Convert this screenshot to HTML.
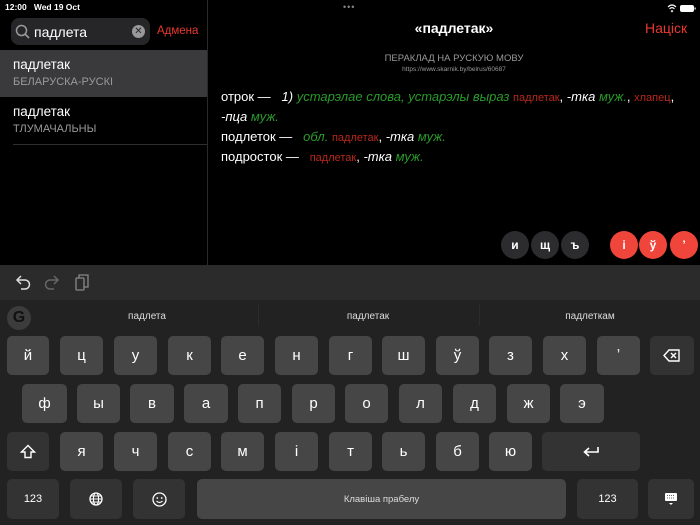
<!DOCTYPE html>
<html><head><meta charset="utf-8"><style>
*{margin:0;padding:0;box-sizing:border-box}
body{width:700px;height:525px;background:#000;position:relative;overflow:hidden;font-family:"Liberation Sans","DejaVu Sans",sans-serif;color:#fff}
.a{position:absolute}
.k{position:absolute;background:#464646;border-radius:5px;color:#fff;font-size:15px;display:flex;align-items:center;justify-content:center}
.s{background:#333}
.c{position:absolute;width:28px;height:28px;border-radius:14px;display:flex;align-items:center;justify-content:center;font-size:12px;font-weight:bold;top:231px}
.g{color:#2a9a2a;font-style:italic}
.r{color:#b8281c}
.i{font-style:italic}
.line{position:absolute;left:221px;font-size:13px;white-space:nowrap}
</style></head><body>
<div class="a" style="left:5px;top:2px;font-size:8.5px;font-weight:bold">12:00&nbsp;&nbsp;&nbsp;Wed 19 Oct</div>
<div class="a" style="left:343px;top:2px;font-size:9px;color:#888;letter-spacing:1px">•••</div>
<svg class="a" style="left:667px;top:4px" width="30" height="9"><path d="M1 3 Q5 -1 9 3 M2.5 4.8 Q5 2.5 7.5 4.8 M4 6.5 L5 7.6 L6 6.5" stroke="#fff" stroke-width="1.2" fill="none"/><rect x="13" y="1" width="14" height="7" rx="2" fill="#fff"/><rect x="27.5" y="3.5" width="1.2" height="2" fill="#fff"/></svg>
<div class="a" style="left:207px;top:0;width:1px;height:265px;background:#2a2a2a"></div>
<div class="a" style="left:11px;top:18px;width:139px;height:27px;background:#262628;border-radius:8px"></div>
<svg class="a" style="left:15px;top:24px" width="16" height="16"><circle cx="6.5" cy="6.5" r="5" stroke="#999" stroke-width="1.5" fill="none"/><path d="M10 10 L14 14" stroke="#999" stroke-width="1.6"/></svg>
<div class="a" style="left:34px;top:24px;font-size:14px">падлета</div>
<div class="a" style="left:132px;top:25px;width:13px;height:13px;border-radius:7px;background:#999;color:#262628;font-size:10px;font-weight:bold;text-align:center;line-height:13px">✕</div>
<div class="a" style="left:157px;top:25px;font-size:11.5px;color:#e8392f">Адмена</div>
<div class="a" style="left:0;top:50px;width:207px;height:47px;background:#3a3a3c"></div>
<div class="a" style="left:13px;top:57px;font-size:13.5px">падлетак</div>
<div class="a" style="left:13px;top:76px;font-size:11px;color:#9a9a9a">БЕЛАРУСКА-РУСКІ</div>
<div class="a" style="left:13px;top:104px;font-size:13.5px">падлетак</div>
<div class="a" style="left:13px;top:123px;font-size:11px;color:#9a9a9a">ТЛУМАЧАЛЬНЫ</div>
<div class="a" style="left:13px;top:144px;width:194px;height:1px;background:#2e2e2e"></div>
<div class="a" style="left:208px;top:20px;width:492px;text-align:center;font-size:14px;font-weight:bold">«падлетак»</div>
<div class="a" style="left:645px;top:20px;font-size:14px;color:#e8392f">Націск</div>
<div class="a" style="left:208px;top:53px;width:492px;text-align:center;font-size:9.5px;color:#999">ПЕРАКЛАД НА РУСКУЮ МОВУ</div>
<div class="a" style="left:208px;top:66px;width:492px;text-align:center;font-size:6.5px;color:#999">https://www.skarnik.by/belrus/60687</div>
<div class="line" style="top:89px">отрок —&nbsp;&nbsp; <span class="i">1)</span> <span class="g">устарэлае слова, устарэлы выраз</span> <span class="r" style="font-size:11px">падлетак</span>, <span class="i">-тка</span> <span class="g">муж.</span>, <span class="r" style="font-size:11px">хлапец</span>,</div>
<div class="line" style="top:109px"><span class="i">-пца</span> <span class="g">муж.</span></div>
<div class="line" style="top:129px">подлеток —&nbsp;&nbsp; <span class="g">обл.</span> <span class="r" style="font-size:11px">падлетак</span>, <span class="i">-тка</span> <span class="g">муж.</span></div>
<div class="line" style="top:149px">подросток —&nbsp;&nbsp; <span class="r" style="font-size:11px">падлетак</span>, <span class="i">-тка</span> <span class="g">муж.</span></div>
<div class="c" style="left:501px;background:#2c2c2e">и</div>
<div class="c" style="left:531px;background:#2c2c2e">щ</div>
<div class="c" style="left:561px;background:#2c2c2e">ъ</div>
<div class="c" style="left:610px;background:#f0453a">і</div>
<div class="c" style="left:639px;background:#f0453a">ў</div>
<div class="c" style="left:670px;background:#f0453a">ʼ</div>
<div class="a" style="left:0;top:265px;width:700px;height:35px;background:#2b2b2b"></div>
<div class="a" style="left:0;top:300px;width:700px;height:225px;background:#222"></div>
<svg class="a" style="left:14px;top:274px" width="80" height="18"><path d="M4 6 H11 A4.5 4.5 0 0 1 11 15 H7 M7 2 L3 6 L7 10" stroke="#ddd" stroke-width="1.5" fill="none"/><path d="M43 6 H36 A4.5 4.5 0 0 0 36 15 H40 M40 2 L44 6 L40 10" stroke="#666" stroke-width="1.5" fill="none"/><rect x="62" y="4" width="8" height="12" rx="1" stroke="#888" stroke-width="1.3" fill="none"/><path d="M65 4 V1 H74 V13 H70" stroke="#888" stroke-width="1.3" fill="none"/></svg>
<div class="a" style="left:7px;top:306px;width:24px;height:24px;border-radius:12px;background:#3c3c3c;color:#111;font-weight:bold;font-size:16px;text-align:center;line-height:24px">G</div>
<div class="a" style="left:72px;top:311px;width:150px;text-align:center;font-size:10px;color:#ddd">падлета</div>
<div class="a" style="left:258px;top:304px;width:1px;height:22px;background:#2c2c2c"></div>
<div class="a" style="left:293px;top:311px;width:150px;text-align:center;font-size:10px;color:#ddd">падлетак</div>
<div class="a" style="left:479px;top:304px;width:1px;height:22px;background:#2c2c2c"></div>
<div class="a" style="left:515px;top:311px;width:150px;text-align:center;font-size:10px;color:#ddd">падлеткам</div>
<div class="k" style="left:7px;top:336px;width:42px;height:39px">й</div>
<div class="k" style="left:60px;top:336px;width:43px;height:39px">ц</div>
<div class="k" style="left:114px;top:336px;width:43px;height:39px">у</div>
<div class="k" style="left:168px;top:336px;width:43px;height:39px">к</div>
<div class="k" style="left:221px;top:336px;width:43px;height:39px">е</div>
<div class="k" style="left:275px;top:336px;width:43px;height:39px">н</div>
<div class="k" style="left:329px;top:336px;width:43px;height:39px">г</div>
<div class="k" style="left:382px;top:336px;width:43px;height:39px">ш</div>
<div class="k" style="left:436px;top:336px;width:43px;height:39px">ў</div>
<div class="k" style="left:489px;top:336px;width:43px;height:39px">з</div>
<div class="k" style="left:543px;top:336px;width:43px;height:39px">х</div>
<div class="k" style="left:597px;top:336px;width:43px;height:39px">ʼ</div>
<div class="k s" style="left:650px;top:336px;width:44px;height:39px"><svg width="18" height="13"><path d="M6 1 H16 V12 H6 L1 6.5 Z" stroke="#fff" stroke-width="1.4" fill="none"/><path d="M8 4 L13 9 M13 4 L8 9" stroke="#fff" stroke-width="1.4"/></svg></div>
<div class="k" style="left:22px;top:384px;width:45px;height:39px">ф</div>
<div class="k" style="left:77px;top:384px;width:43px;height:39px">ы</div>
<div class="k" style="left:130px;top:384px;width:44px;height:39px">в</div>
<div class="k" style="left:184px;top:384px;width:44px;height:39px">а</div>
<div class="k" style="left:238px;top:384px;width:43px;height:39px">п</div>
<div class="k" style="left:292px;top:384px;width:43px;height:39px">р</div>
<div class="k" style="left:345px;top:384px;width:43px;height:39px">о</div>
<div class="k" style="left:399px;top:384px;width:43px;height:39px">л</div>
<div class="k" style="left:453px;top:384px;width:43px;height:39px">д</div>
<div class="k" style="left:507px;top:384px;width:43px;height:39px">ж</div>
<div class="k" style="left:560px;top:384px;width:44px;height:39px">э</div>
<div class="k s" style="left:7px;top:432px;width:42px;height:39px"><svg width="16" height="15"><path d="M8 1.5 L14.5 8 H11 V13.5 H5 V8 H1.5 Z" stroke="#fff" stroke-width="1.4" fill="none"/></svg></div>
<div class="k" style="left:60px;top:432px;width:43px;height:39px">я</div>
<div class="k" style="left:114px;top:432px;width:43px;height:39px">ч</div>
<div class="k" style="left:168px;top:432px;width:43px;height:39px">с</div>
<div class="k" style="left:221px;top:432px;width:43px;height:39px">м</div>
<div class="k" style="left:275px;top:432px;width:43px;height:39px">і</div>
<div class="k" style="left:329px;top:432px;width:43px;height:39px">т</div>
<div class="k" style="left:382px;top:432px;width:43px;height:39px">ь</div>
<div class="k" style="left:436px;top:432px;width:43px;height:39px">б</div>
<div class="k" style="left:489px;top:432px;width:43px;height:39px">ю</div>
<div class="k s" style="left:542px;top:432px;width:98px;height:39px"><svg width="18" height="12"><path d="M16 1 V6 H3 M7 2 L2.5 6 L7 10" stroke="#fff" stroke-width="1.6" fill="none"/></svg></div>
<div class="k s" style="left:7px;top:479px;width:52px;height:40px;font-size:11px">123</div>
<div class="k s" style="left:70px;top:479px;width:52px;height:40px"><svg width="14" height="14"><circle cx="7" cy="7" r="6" stroke="#fff" stroke-width="1.3" fill="none"/><ellipse cx="7" cy="7" rx="2.6" ry="6" stroke="#fff" stroke-width="1.1" fill="none"/><path d="M1 7 H13 M2 4 H12 M2 10 H12" stroke="#fff" stroke-width="1"/></svg></div>
<div class="k s" style="left:133px;top:479px;width:52px;height:40px"><svg width="15" height="15"><circle cx="7.5" cy="7.5" r="6.5" stroke="#fff" stroke-width="1.3" fill="none"/><circle cx="5.3" cy="6" r="0.9" fill="#fff"/><circle cx="9.7" cy="6" r="0.9" fill="#fff"/><path d="M4.5 9 Q7.5 12 10.5 9" stroke="#fff" stroke-width="1.2" fill="none"/></svg></div>
<div class="k" style="left:197px;top:479px;width:369px;height:40px;font-size:9.5px;color:#ddd">Клавіша прабелу</div>
<div class="k s" style="left:577px;top:479px;width:61px;height:40px;font-size:11px">123</div>
<div class="k s" style="left:648px;top:479px;width:46px;height:40px"><svg width="14" height="14"><rect x="1" y="1" width="12" height="8" rx="1" fill="#fff"/><path d="M3 3.5 H11 M3 6 H11" stroke="#333" stroke-width="0.8" stroke-dasharray="1 1"/><path d="M5 11 L7 13 L9 11" fill="#fff"/></svg></div>
</body></html>
